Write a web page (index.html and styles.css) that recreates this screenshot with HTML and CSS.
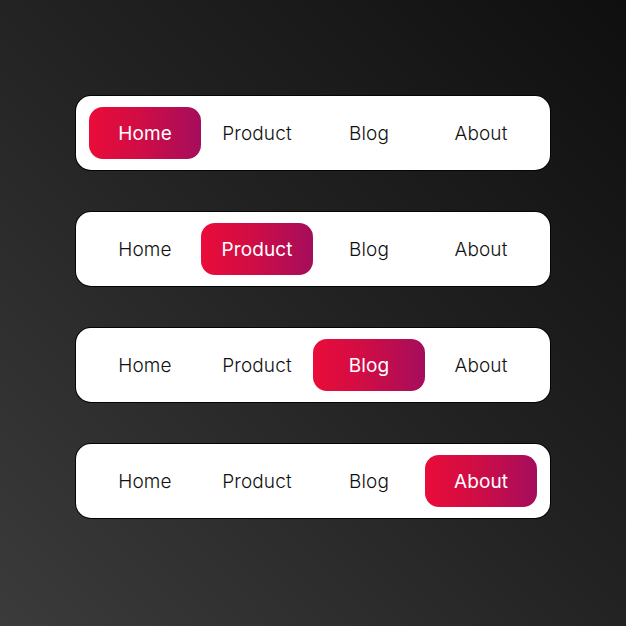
FILE: index.html
```html
<!DOCTYPE html>
<html>
<head>
<meta charset="utf-8">
<link rel="stylesheet" href="styles.css">
</head>
<body>
<div class="stack">
  <nav class="bar">
    <span class="item active">Home</span>
    <span class="item">Product</span>
    <span class="item">Blog</span>
    <span class="item">About</span>
  </nav>
  <nav class="bar">
    <span class="item">Home</span>
    <span class="item active">Product</span>
    <span class="item">Blog</span>
    <span class="item">About</span>
  </nav>
  <nav class="bar">
    <span class="item">Home</span>
    <span class="item">Product</span>
    <span class="item active">Blog</span>
    <span class="item">About</span>
  </nav>
  <nav class="bar">
    <span class="item">Home</span>
    <span class="item">Product</span>
    <span class="item">Blog</span>
    <span class="item active">About</span>
  </nav>
</div>
</body>
</html>
```
FILE: styles.css
```css
html, body {
  margin: 0;
  padding: 0;
  width: 626px;
  height: 626px;
  overflow: hidden;
}
body {
  background: linear-gradient(45deg, #3b3b3b 0%, #232323 50%, #0f0f0f 100%);
  font-family: "Inter", "Lato", sans-serif;
}
.stack {
  display: flex;
  flex-direction: column;
  gap: 42px;
  padding: 96px 0 0 76px;
}
.bar {
  width: 448px;
  height: 52px;
  padding: 11px 13px;
  background: #fff;
  border-radius: 15px;
  box-shadow: 0 0 0 1px #050505;
  display: grid;
  grid-template-columns: repeat(4, 1fr);
}
.item {
  display: flex;
  align-items: center;
  justify-content: center;
  font-size: 19px;
  font-weight: 300;
  color: #111;
  border-radius: 14px;
  letter-spacing: 0.1px;
}
.item.active {
  background: linear-gradient(90deg, #ea0c39 0%, #d00d45 45%, #a50d5c 100%);
  color: #fff;
  font-weight: 400;
}
```
